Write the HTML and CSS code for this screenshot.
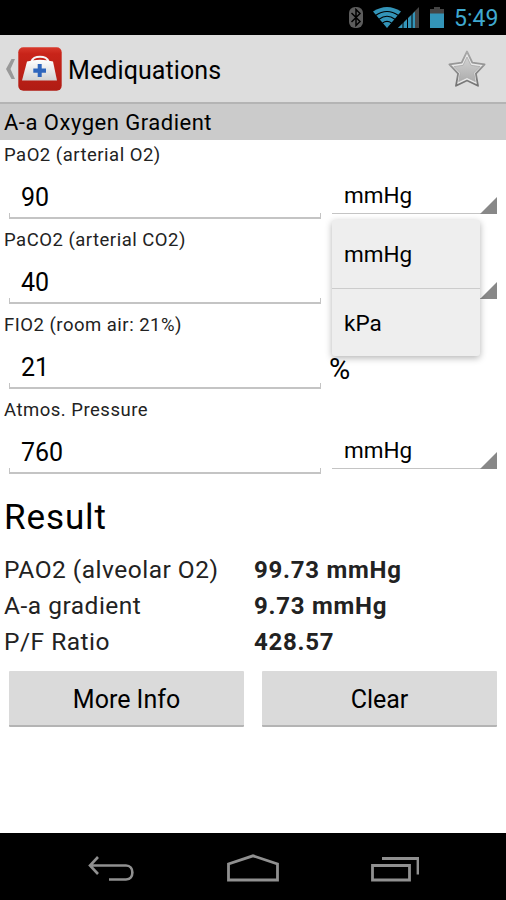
FILE: index.html
```html
<!DOCTYPE html>
<html lang="en">
<head>
  <meta charset="UTF-8" />
  <meta name="viewport" content="width=device-width, initial-scale=1" />
  <title>Mediquations</title>
  <link rel="stylesheet" href="styles.css">
</head>
<body>
  <div class="status-bar">
    <svg class="status-icons" width="100" height="35" viewBox="0 0 100 35">
      <rect x="3" y="7" width="14" height="21" rx="6" fill="#5c5c5c" />
      <path d="M5.500 13l8.500 8.500-4 4V9.500l4 4-8.500 8.500" fill="none" stroke="#000" stroke-width="1.500" />
      <path d="M27 11.500Q41 2.500 55 11.500L41 28z" fill="#3394b8" />
      <path d="M29.500 15.500q11.500-8 23 0M33 19.200q8-5.800 16 0M36.500 23q4.500-3.200 9 0" fill="none" stroke="#000" stroke-width="1.100" />
      <path d="M73 7v21H52z" fill="#444" />
      <path d="M69 11.500V28H52z" fill="#3394b8" />
      <path d="M57 20v8M61.500 16v12M66 11v17" stroke="#000" stroke-width="1" />
      <path d="M88 7h6v2h4v5H84V9h4z" fill="#444" />
      <path d="M84 13.500h14V28H84z" fill="#3394b8" />
    </svg>
    <span class="clock">5:49</span>
  </div>

  <div class="action-bar">
    <svg class="up" width="9" height="20" viewBox="0 0 9 20">
      <path d="M5.500 0H9L4.500 10 9 20H5.500L0 10z" fill="#999" />
    </svg>
    <svg class="app-icon" width="44" height="44" viewBox="0 0 44 44">
      <defs>
        <linearGradient id="red" x1="0" y1="0" x2="0" y2="1">
          <stop offset="0" stop-color="#d8392c" />
          <stop offset=".15" stop-color="#c82419" />
          <stop offset="1" stop-color="#b01c14" />
        </linearGradient>
        <linearGradient id="bag" x1="0" y1="0" x2="0" y2="1">
          <stop offset="0" stop-color="#fff" />
          <stop offset="1" stop-color="#d2d2d2" />
        </linearGradient>
      </defs>
      <rect x=".3" y=".3" width="43.400" height="43.400" rx="5" fill="url(#red)" />
      <path d="M13.500 15c1-7 16-7 17 0" fill="none" stroke="#f6f6f6" stroke-width="2.200" />
      <path d="M9 14.500Q22 11 35 14.500L39 33.500H4z" fill="url(#bag)" />
      <path d="M19.700 17h4v4.500H28v4.200h-4.300V30h-4v-4.300h-4.400v-4.200h4.400z" fill="#2f66bd" />
    </svg>
    <h1 class="app-title">Mediquations</h1>
    <svg class="star" width="40" height="40" viewBox="0 0 40 40">
      <defs>
        <linearGradient id="star" x1="0" y1="0" x2="0" y2="1">
          <stop offset="0" stop-color="#d2d2d2" />
          <stop offset="1" stop-color="#adadad" />
        </linearGradient>
        <linearGradient id="edge" x1="0" y1="0" x2="0" y2="1">
          <stop offset="0" stop-color="#aaa" />
          <stop offset="1" stop-color="#737373" />
        </linearGradient>
      </defs>
      <path d="M20 2.500l5.300 11.200 12.300 1.700-8.700 9.200 2.100 12.200L20 31.500 9 36.800l2.100-12.200-8.700-9.200 12.300-1.700z" fill="#e9e9e9" stroke="url(#edge)" stroke-width="1.800" stroke-linejoin="round" />
      <path d="M20 8l4 8.300 9 1.300-6.200 6.300 1.500 8.700L20 28.500l-8.300 4.100 1.500-8.700L7 17.600l9-1.300z" fill="url(#star)" stroke="#aaa" stroke-width=".8" />
    </svg>
  </div>

  <h2 class="section">A-a Oxygen Gradient</h2>

  <div class="field">
    <label for="pao2">PaO2 (arterial O2)</label>
    <div class="controls">
      <input type="text" id="pao2" value="90" />
      <div class="spinner">mmHg
        <div class="dropdown">
          <div class="option">mmHg</div>
          <div class="option">kPa</div>
        </div>
      </div>
    </div>
  </div>
  <div class="field">
    <label for="paco2">PaCO2 (arterial CO2)</label>
    <div class="controls">
      <input type="text" id="paco2" value="40" />
      <div class="spinner"></div>
    </div>
  </div>
  <div class="field">
    <label for="fio2">FIO2 (room air: 21%)</label>
    <div class="controls">
      <input type="text" id="fio2" value="21" />
      <span class="unit">%</span>
    </div>
  </div>
  <div class="field">
    <label for="pressure">Atmos. Pressure</label>
    <div class="controls">
      <input type="text" id="pressure" value="760" />
      <div class="spinner">mmHg</div>
    </div>
  </div>

  <h2 class="result-title">Result</h2>
  <dl class="results">
    <dt>PAO2 (alveolar O2)</dt><dd>99.73 mmHg</dd>
    <dt>A-a gradient</dt><dd>9.73 mmHg</dd>
    <dt>P/F Ratio</dt><dd>428.57</dd>
  </dl>

  <div class="buttons">
    <button class="btn">More Info</button>
    <button class="btn">Clear</button>
  </div>

  <div class="nav-bar">
    <svg width="48" height="30" viewBox="0 0 48 30">
      <path d="M11 3L3 11.500 11 20M3 11.500h36c8.500 0 8.500 14 0 14H22" fill="none" stroke="#909090" stroke-width="2.600" />
    </svg>
    <svg width="54" height="30" viewBox="0 0 54 30">
      <path d="M2.500 26V10L27 1.800 51.500 10v16z" fill="none" stroke="#909090" stroke-width="2.800" />
    </svg>
    <svg width="48" height="30" viewBox="0 0 48 30">
      <path d="M1.500 11.500h37V26h-37zM11 4.500h36v16" fill="none" stroke="#909090" stroke-width="2.800" />
    </svg>
  </div>
</body>
</html>
```
FILE: styles.css
```css
* {
  box-sizing: border-box;
}
body {
  margin: 0;
  height: 900px;
  display: flex;
  flex-direction: column;
  overflow: hidden;
  background-color: #fff;
  color: #000;
  font-family: Roboto, sans-serif;
}
h1, h2, dl, dd {
  margin: 0;
  font-weight: 400;
}
.status-bar {
  height: 35px;
  display: flex;
  justify-content: flex-end;
  background-color: #000;
}
.status-icons {
  margin-right: 8px;
}
.clock {
  width: 52px;
  color: #3fa9d0;
  font-size: 23px;
  line-height: 37px;
}
.action-bar {
  height: 69px;
  display: flex;
  align-items: center;
  padding: 0 19px 0 6px;
  background-color: #ddd;
  border-bottom: 2px solid #b4b4b4;
}
.app-icon {
  margin-left: 3px;
}
.app-title {
  margin-left: 6px;
  padding-top: 3px;
  font-size: 25px;
  letter-spacing: 0.1px;
}
.star {
  margin-left: auto;
}
.section {
  height: 36px;
  padding-left: 4px;
  background-color: #cbcbcb;
  font-size: 22px;
  line-height: 38px;
  letter-spacing: 0.5px;
}
.field {
  height: 85px;
}
.field label {
  display: block;
  height: 30px;
  padding-left: 4px;
  color: #222;
  font-size: 18.5px;
  line-height: 31px;
  letter-spacing: 0.5px;
}
.controls {
  display: flex;
  padding-left: 9px;
}
.controls input {
  width: 312px;
  height: 49px;
  padding: 7px 11px 0;
  border: solid #c4c4c4;
  border-width: 0 1px 2px;
  border-image: linear-gradient(to top, #c4c4c4 6px, transparent 6px) 0 1 2 1;
  background: none;
  font-family: inherit;
  font-size: 25px;
}
.spinner {
  position: relative;
  width: 165px;
  height: 44px;
  margin-left: 11px;
  padding-left: 12px;
  border-bottom: 1px solid #c4c4c4;
  font-size: 22.5px;
  line-height: 50px;
}
.spinner::after {
  content: "";
  position: absolute;
  right: 0;
  bottom: -1px;
  border-left: 17px solid transparent;
  border-bottom: 17px solid #888;
}
.dropdown {
  position: absolute;
  z-index: 1;
  top: 50px;
  left: 0;
  width: 148px;
  border-radius: 3px;
  background-color: #eee;
  box-shadow: 0 2px 7px rgba(0,0,0,0.3);
}
.option {
  height: 68px;
  padding-left: 12px;
  line-height: 69px;
}
.option + .option {
  border-top: 1px solid #ccc;
}
.unit {
  margin-left: 8px;
  font-size: 29px;
  line-height: 59px;
}
.result-title {
  height: 72px;
  padding-left: 4px;
  font-size: 35px;
  line-height: 76px;
  letter-spacing: 0.9px;
}
.results {
  display: grid;
  grid-template-columns: 250px 1fr;
  grid-auto-rows: 36px;
  padding-left: 4px;
  color: #222;
  font-size: 24.5px;
  line-height: 36px;
  letter-spacing: 0.5px;
}
.results dd {
  font-size: 24px;
  font-weight: 700;
  letter-spacing: 0.75px;
}
.buttons {
  display: grid;
  grid-template-columns: 1fr 1fr;
  gap: 18px;
  padding: 11px 9px 0;
}
.btn {
  height: 56px;
  padding: 3px 0 0;
  border: none;
  border-bottom: 2px solid #b4b4b4;
  border-radius: 1px;
  background-color: #dadada;
  color: #000;
  font-family: inherit;
  font-size: 25px;
}
.nav-bar {
  height: 67px;
  margin-top: auto;
  display: flex;
  justify-content: space-between;
  align-items: center;
  padding: 4px 87px 0 87px;
  background-color: #000;
}
```
